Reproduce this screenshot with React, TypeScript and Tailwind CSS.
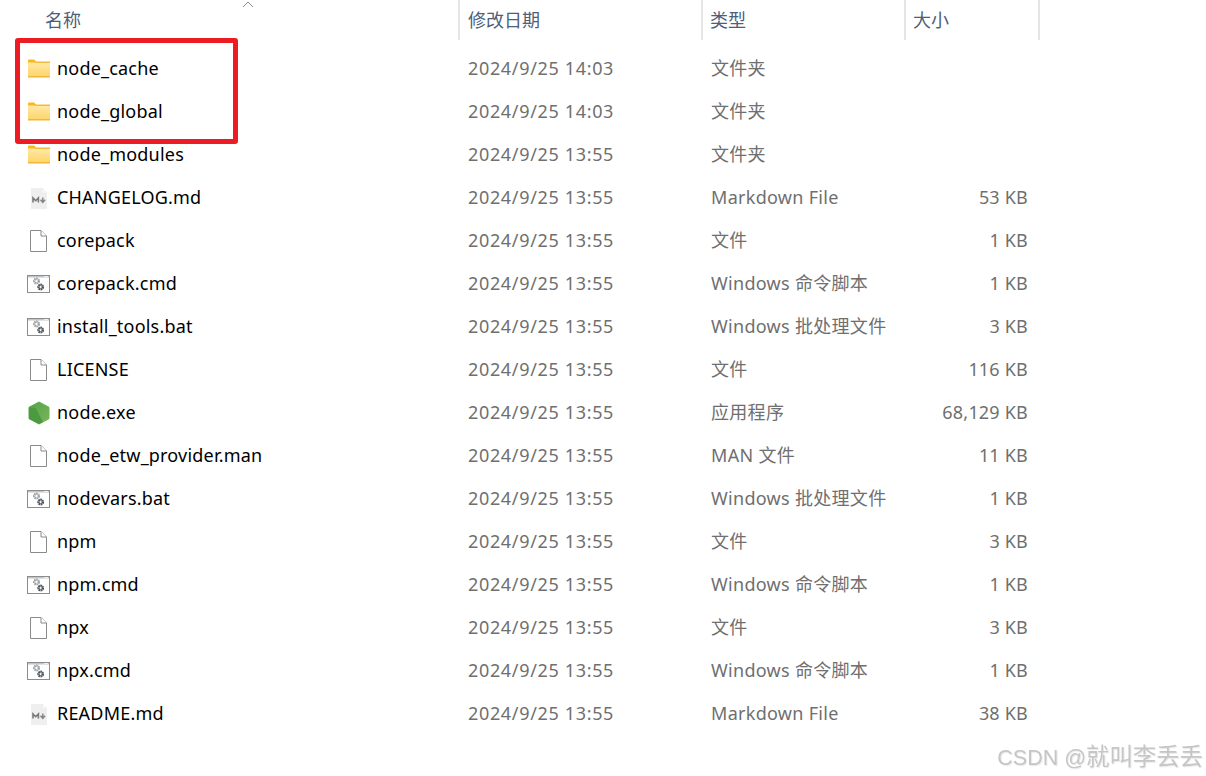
const FONT = "font-['Noto_Sans','Noto_Sans_CJK_SC',sans-serif]";

function FolderIcon() {
  return (
    <svg width="24" height="20" viewBox="0 0 24 20" className="block">
      <defs>
        <linearGradient id="fg" x1="0" y1="0" x2="0" y2="1">
          <stop offset="0" stopColor="#ffe9a6" />
          <stop offset="1" stopColor="#fdd468" />
        </linearGradient>
      </defs>
      <path d="M1 1.500 A1 1 0 0 1 2 0.500 H7 L9 2.500 V4 H1 Z" fill="#fbb818" />
      <rect x="1" y="3.500" width="22" height="14.500" fill="url(#fg)" />
      <rect x="8" y="2.500" width="15" height="1.500" fill="#f3bb3e" />
      <rect x="1" y="17" width="22" height="1.500" fill="#f2b63a" />
    </svg>
  );
}

function FileIcon() {
  return (
    <svg width="24" height="24" viewBox="0 0 24 24" className="block">
      <path d="M3.500 1.500 H14 L19.500 7 V22.500 H3.500 Z" fill="#fff" stroke="#8a8a8a" strokeWidth="1" />
      <path d="M14 1.500 V7 H19.500" fill="#fff" stroke="#8a8a8a" strokeWidth="1" />
    </svg>
  );
}

function MdIcon() {
  return (
    <svg width="24" height="24" viewBox="0 0 24 24" className="block">
      <path d="M4 2 H15 L20 7 V22.500 Q20 23 19.500 23 H4.500 Q4 23 4 22.500 Z" fill="#efefef" />
      <path d="M15 2 V7 H20 Z" fill="#fafafa" stroke="#e2e2e2" strokeWidth="0.500" />
      <path d="M6 16.500 V12 L8.700 14.700 L11.400 12 V16.500" fill="none" stroke="#787878" strokeWidth="1.600" />
      <path d="M15.800 11.500 V16 M13.500 13.800 L15.800 16.300 L18.100 13.800" fill="none" stroke="#858585" strokeWidth="1.500" />
    </svg>
  );
}

function CmdIcon() {
  return (
    <svg width="24" height="24" viewBox="0 0 24 24" className="block">
      <rect x="0.500" y="3.500" width="22" height="17" fill="#fff" stroke="#8c8c8c" />
      <rect x="1" y="4" width="21" height="1.500" fill="#c4c4c4" />
      <rect x="17" y="4" width="4" height="1" fill="#f0f0f0" />
      <circle cx="9.500" cy="9" r="2.300" fill="none" stroke="#9aa2aa" strokeWidth="2.400" strokeDasharray="1.400 0.500" />
      <circle cx="13.700" cy="15" r="2.200" fill="none" stroke="#4a5158" strokeWidth="2.400" strokeDasharray="1.400 0.400" />
    </svg>
  );
}

function NodeIcon() {
  return (
    <svg width="24" height="24" viewBox="0 0 24 24" className="block">
      <defs>
        <linearGradient id="ng" x1="0" y1="0" x2="1" y2="1">
          <stop offset="0" stopColor="#4fa548" />
          <stop offset="1" stopColor="#7eb35a" />
        </linearGradient>
      </defs>
      <path d="M12 1 L22 6.300 V17.700 L12 23 L2 17.700 V6.300 Z" fill="url(#ng)" stroke="url(#ng)" strokeWidth="1" strokeLinejoin="round" />
      <path d="M2 6.300 L8.500 7 L16 21 L12 23 L2 17.700 Z" fill="#4b9a3e" />
    </svg>
  );
}

type Kind = "folder" | "file" | "md" | "cmd" | "node";

const rows: { icon: Kind; name: string; time: string; type: string; size: string }[] = [
  { icon: "folder", name: "node_cache", time: "2024/9/25 14:03", type: "文件夹", size: "" },
  { icon: "folder", name: "node_global", time: "2024/9/25 14:03", type: "文件夹", size: "" },
  { icon: "folder", name: "node_modules", time: "2024/9/25 13:55", type: "文件夹", size: "" },
  { icon: "md", name: "CHANGELOG.md", time: "2024/9/25 13:55", type: "Markdown File", size: "53 KB" },
  { icon: "file", name: "corepack", time: "2024/9/25 13:55", type: "文件", size: "1 KB" },
  { icon: "cmd", name: "corepack.cmd", time: "2024/9/25 13:55", type: "Windows 命令脚本", size: "1 KB" },
  { icon: "cmd", name: "install_tools.bat", time: "2024/9/25 13:55", type: "Windows 批处理文件", size: "3 KB" },
  { icon: "file", name: "LICENSE", time: "2024/9/25 13:55", type: "文件", size: "116 KB" },
  { icon: "node", name: "node.exe", time: "2024/9/25 13:55", type: "应用程序", size: "68,129 KB" },
  { icon: "file", name: "node_etw_provider.man", time: "2024/9/25 13:55", type: "MAN 文件", size: "11 KB" },
  { icon: "cmd", name: "nodevars.bat", time: "2024/9/25 13:55", type: "Windows 批处理文件", size: "1 KB" },
  { icon: "file", name: "npm", time: "2024/9/25 13:55", type: "文件", size: "3 KB" },
  { icon: "cmd", name: "npm.cmd", time: "2024/9/25 13:55", type: "Windows 命令脚本", size: "1 KB" },
  { icon: "file", name: "npx", time: "2024/9/25 13:55", type: "文件", size: "3 KB" },
  { icon: "cmd", name: "npx.cmd", time: "2024/9/25 13:55", type: "Windows 命令脚本", size: "1 KB" },
  { icon: "md", name: "README.md", time: "2024/9/25 13:55", type: "Markdown File", size: "38 KB" },
];

function Icon({ kind }: { kind: Kind }) {
  if (kind === "folder") return <FolderIcon />;
  if (kind === "md") return <MdIcon />;
  if (kind === "cmd") return <CmdIcon />;
  if (kind === "node") return <NodeIcon />;
  return <FileIcon />;
}

export default function App() {
  return (
    <div className={`relative w-[1206px] h-[776px] overflow-hidden bg-white ${FONT} text-[18px]`}>
      <div className="flex h-[40px] w-[1040px] text-[#4c607a]">
        <div className="relative w-[458px] pl-[45px] leading-[41px]">
          名称
          <svg width="12" height="8" viewBox="0 0 12 8" className="absolute left-[242px] top-0">
            <path d="M1 7 L6 2 L11 7" fill="none" stroke="#8a8a8a" strokeWidth="1" />
          </svg>
        </div>
        <div className="w-[243px] border-l-2 border-[#e5e5e5] pl-[8px] leading-[41px]">修改日期</div>
        <div className="w-[203px] border-l-2 border-[#e5e5e5] pl-[7px] leading-[41px]">类型</div>
        <div className="w-[136px] border-x-2 border-[#e5e5e5] pl-[7px] leading-[41px]">大小</div>
      </div>
      <div className="mt-[7px] flex w-[1040px] flex-col">
        {rows.map((r) => (
          <div key={r.name} className="flex h-[43px] items-center">
            <div className="flex w-[468px] items-center">
              <div className="ml-[27px] mr-[6px] flex w-[24px] justify-center">
                <Icon kind={r.icon} />
              </div>
              <span className="tracking-[0.2px] text-black">{r.name}</span>
            </div>
            <div className="w-[243px] tracking-[0.66px] text-[#6f6f6f]">{r.time}</div>
            <div className="w-[205px] tracking-[0.3px] text-[#6f6f6f]">{r.type}</div>
            <div className="w-[112px] text-right tracking-[0.2px] text-[#6f6f6f]">{r.size}</div>
          </div>
        ))}
      </div>
      <div className="absolute left-[15px] top-[38px] h-[106px] w-[223px] rounded-[3px] border-[5px] border-[#ed1c24]" />
      <div className="absolute right-[3px] top-[742px] font-['Liberation_Sans','Noto_Sans_CJK_SC',sans-serif] text-[23.4px] leading-[30px] text-[#c6c6c6] blur-[0.5px] [text-shadow:1px_1px_1px_#e8e8e8]">
        <span className="text-[21.5px]">CSDN @</span>就叫李丢丢
      </div>
    </div>
  );
}
